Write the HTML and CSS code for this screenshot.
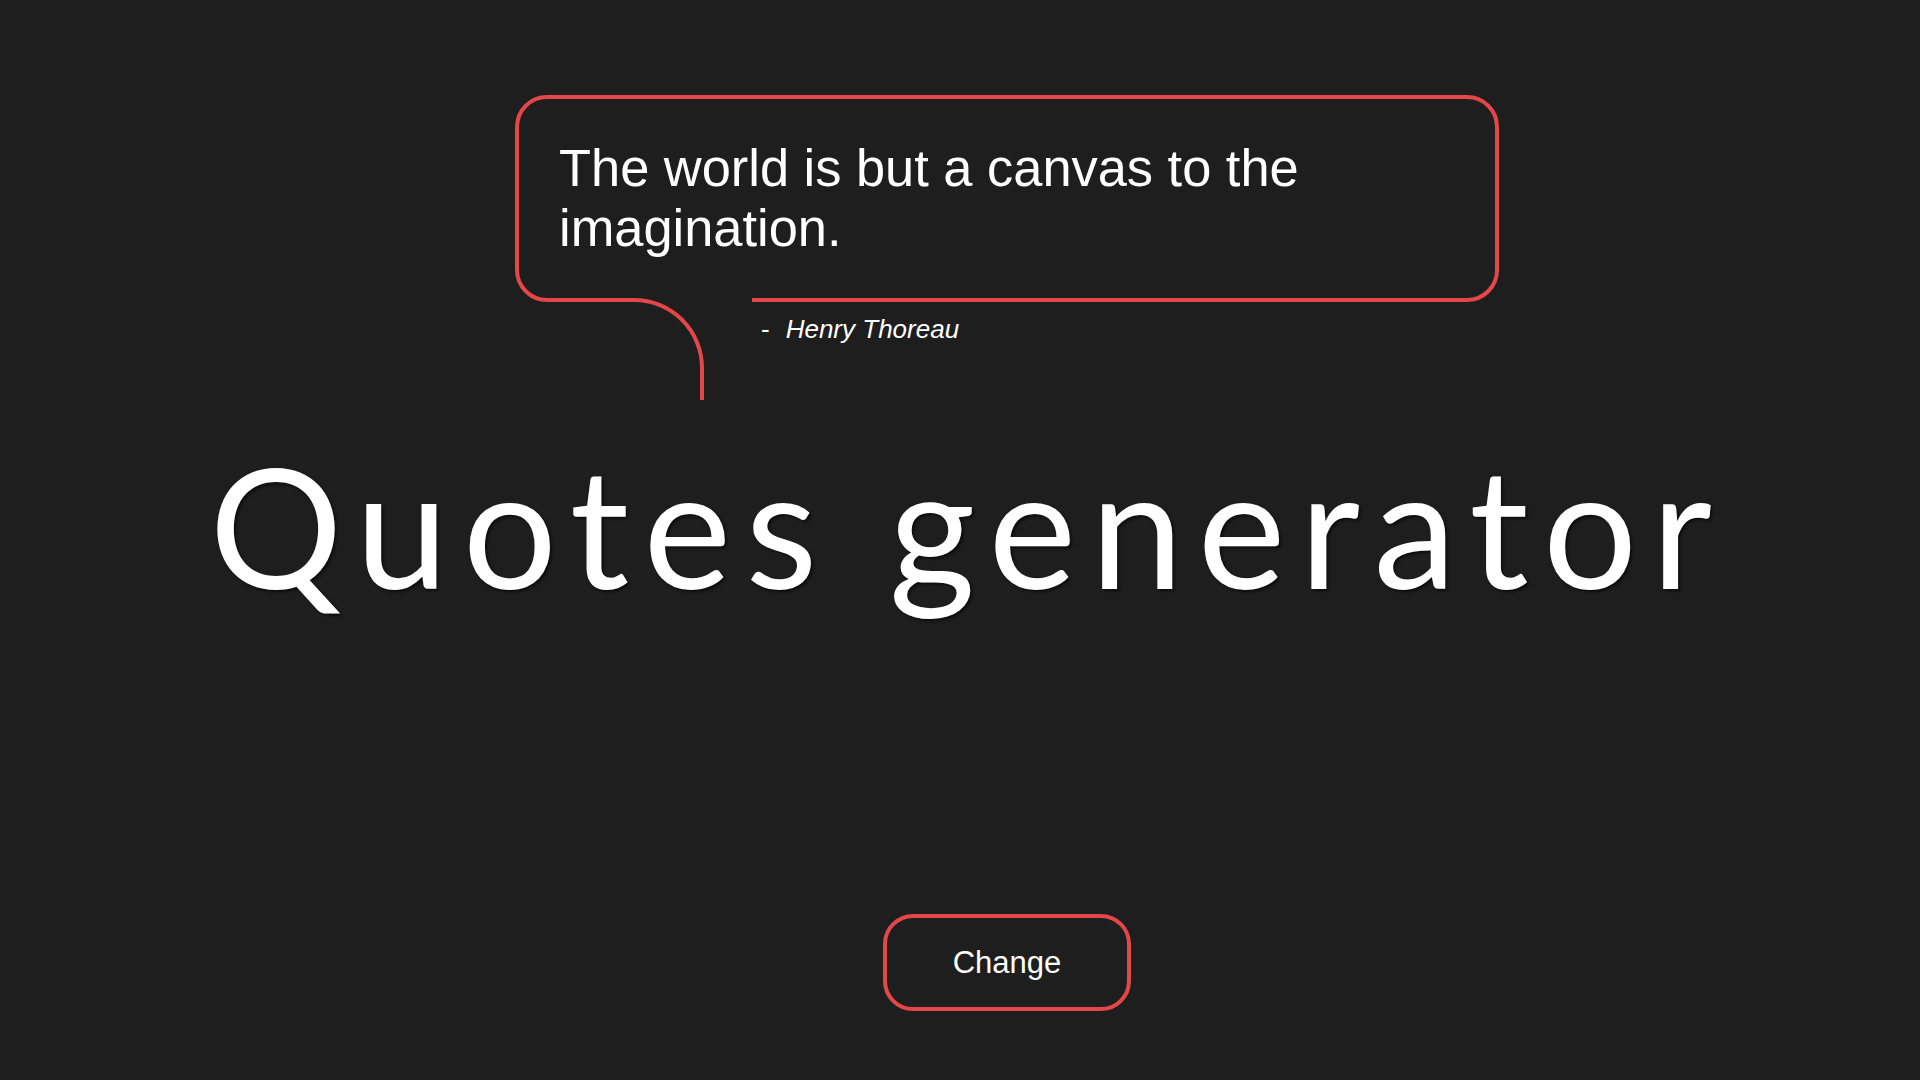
FILE: index.html
```html
<!DOCTYPE html>
<html lang="en">
<head>
<meta charset="utf-8">
<title>Quotes generator</title>
<link rel="stylesheet" href="styles.css">
</head>
<body>
<main class="page">
  <section class="quote-area">
    <div class="quote-block">
      <blockquote class="bubble">The world is but a canvas to the imagination.</blockquote>
      <p class="author"><span class="dash">-</span>Henry Thoreau</p>
    </div>
  </section>
  <h1 class="title">Quotes generator</h1>
  <div class="actions">
    <button class="change-btn" type="button">Change</button>
  </div>
</main>
</body>
</html>
```

FILE: styles.css
```css
html, body {
  margin: 0;
  padding: 0;
  background: #1e1e1e;
  height: 100%;
}

body {
  color: #ffffff;
  font-family: "Liberation Sans", Arial, sans-serif;
  overflow: hidden;
}

.page {
  display: flex;
  flex-direction: column;
  padding-top: 95px;
}

.quote-area {
  display: flex;
  flex-direction: column;
  align-items: center;
  padding-left: 94px;
}

.quote-block {
  width: 984px;
}

.bubble {
  position: relative;
  margin: 0;
  box-sizing: border-box;
  width: 984px;
  border: 4px solid #e34747;
  border-radius: 32px;
  padding: 39px 40px 40px;
  font-size: 52.4px;
  line-height: normal;
  color: #ffffff;
}

/* gap in the bottom edge where the tail leaves the bubble */
.bubble::before {
  content: "";
  position: absolute;
  top: 100%;
  left: 100px;
  width: 133px;
  height: 5px;
  background: #1e1e1e;
}

/* curved tail */
.bubble::after {
  content: "";
  position: absolute;
  top: 100%;
  left: 41px;
  width: 144px;
  height: 102px;
  box-sizing: border-box;
  border-top: 4px solid #e34747;
  border-right: 4px solid #e34747;
  border-top-right-radius: 70px;
}

.author {
  margin: 12px 0 0;
  padding-left: 246px;
  font-size: 26px;
  font-style: italic;
  line-height: normal;
  color: #ffffff;
}

.dash {
  margin-right: 16px;
  font-style: normal;
}

.title {
  margin: 80px 0 0;
  padding-left: 16px;
  text-align: center;
  font-family: Lato, "Noto Sans", sans-serif;
  font-weight: 400;
  font-size: 166px;
  line-height: normal;
  letter-spacing: 14.5px;
  color: #ffffff;
  text-shadow: 2px 2px 3px rgba(0, 0, 0, 0.6);
}

.actions {
  display: flex;
  justify-content: center;
  padding-left: 94px;
  margin-top: 290px;
}

.change-btn {
  box-sizing: border-box;
  width: 248px;
  height: 97px;
  display: flex;
  align-items: center;
  justify-content: center;
  background: #1e1e1e;
  border: 4px solid #e34747;
  border-radius: 30px;
  color: #ffffff;
  font-family: "Liberation Sans", Arial, sans-serif;
  font-size: 31px;
  padding: 0;
  cursor: pointer;
}
```
